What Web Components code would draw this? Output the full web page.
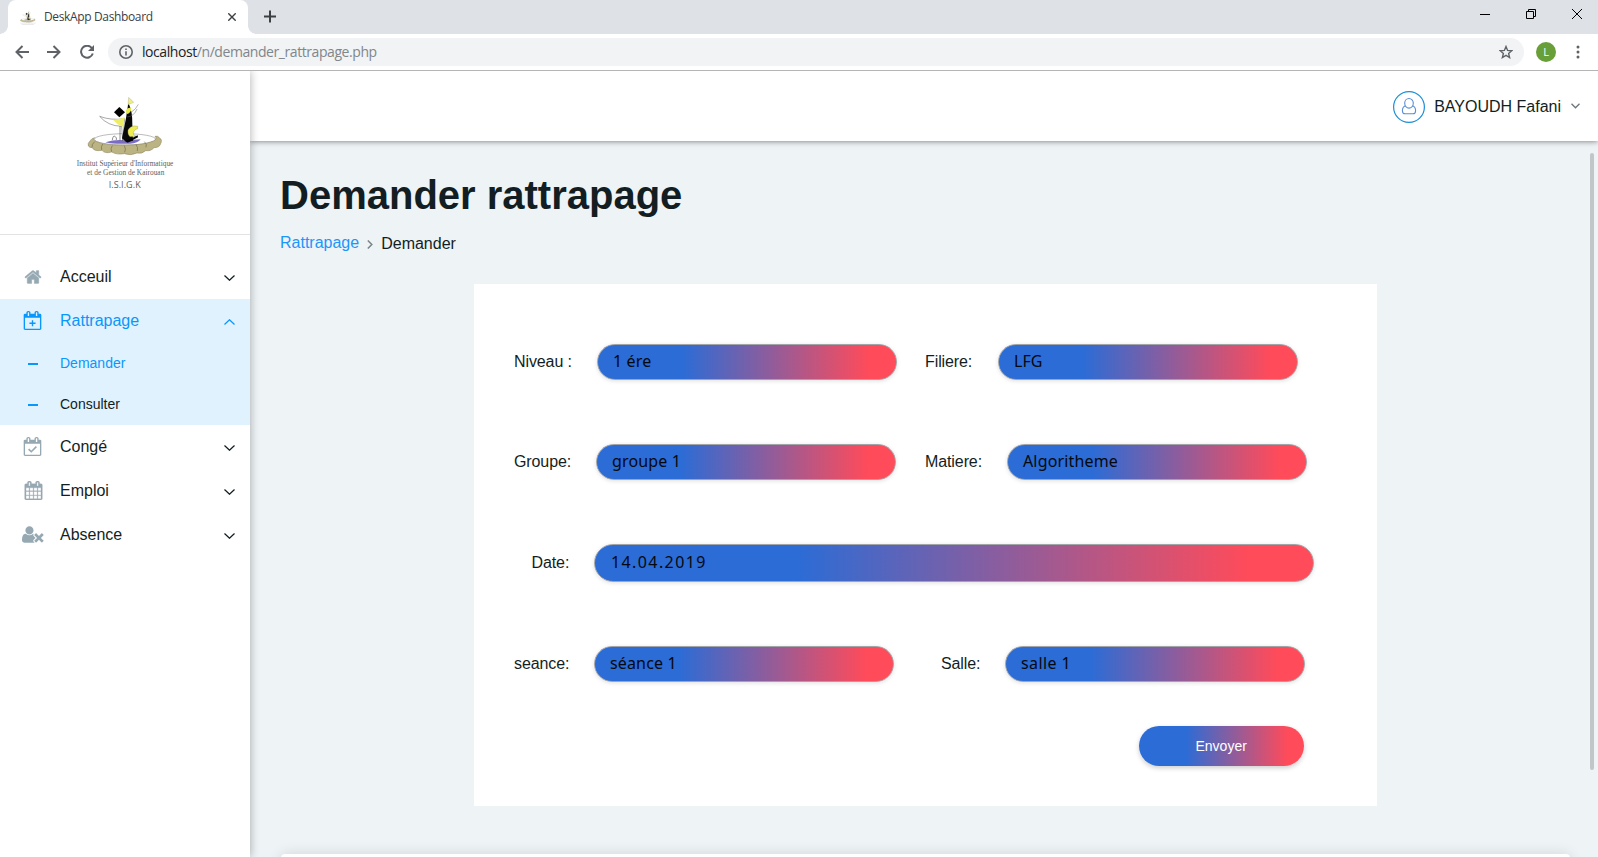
<!DOCTYPE html>
<html lang="fr">
<head>
<meta charset="utf-8">
<title>DeskApp Dashboard</title>
<style>
html,body{margin:0;height:100%;overflow:hidden;background:#fff}
body{font-family:"Liberation Sans",Arial,sans-serif;font-size:16px;color:#131e22}
</style>
</head>
<body>
<desk-window></desk-window>
<script>
const define = (name, html) => customElements.define(name, class extends HTMLElement {
  constructor() {
    super();
    const t = document.createElement('template');
    t.innerHTML = typeof html === 'function' ? html(this) : html;
    this.attachShadow({mode: 'open'}).append(t.content.cloneNode(true));
  }
});

const calFrame = 'M1728 384v1280q0 52-38 90t-90 38h-1408q-52 0-90-38t-38-90v-1280q0-52 38-90t90-38h128v-96q0-66 47-113t113-47h64q66 0 113 47t47 113v96h384v-96q0-66 47-113t113-47h64q66 0 113 47t47 113v96h128q52 0 90 38t38 90zM576 448v-288q0-13-9.500-22.500t-22.500-9.500h-64q-13 0-22.500 9.500t-9.500 22.500v288q0 13 9.500 22.500t22.500 9.500h64q13 0 22.500-9.500t9.500-22.500zM1344 448v-288q0-13-9.500-22.500t-22.500-9.500h-64q-13 0-22.500 9.500t-9.500 22.500v288q0 13 9.500 22.500t22.500 9.500h64q13 0 22.500-9.500t9.500-22.500z';
const icons = {
  home: ['0 0 1792 1792', 18, '<path d="M1472 992v480q0 26-19 45t-45 19h-384v-384h-256v384h-384q-26 0-45-19t-19-45v-480q0-1 .5-3t.5-3l575-474 575 474q1 2 1 6zm223-69l-62 74q-8 9-21 11h-3q-13 0-21-7l-692-577-692 577q-12 8-24 7-13-2-21-11l-62-74q-8-10-7-23.500t11-21.500l719-599q32-26 76-26t76 26l244 204v-195q0-14 9-23t23-9h192q14 0 23 9t9 23v408l219 182q10 8 11 21.500t-7 23.500z" stroke="currentColor" stroke-width="40"/>'],
  plus: ['0 0 1792 1792', 19, `<path fill-rule="evenodd" d="${calFrame}M192 640h1408v1024h-1408z"/><path d="M832 864h128v224h224v128h-224v224h-128v-224h-224v-128h224z"/>`],
  check: ['0 0 1792 1792', 19, `<path fill-rule="evenodd" d="${calFrame}M192 640h1408v1024h-1408z"/><path d="M530 1140l250 250 480-480" fill="none" stroke="currentColor" stroke-width="150"/>`],
  grid: ['0 0 1792 1792', 19, `<path fill-rule="evenodd" d="${calFrame}M192 640h288v288h-288zM544 640h320v288h-320zM928 640h320v288h-320zM1312 640h288v288h-288zM192 992h288v320h-288zM544 992h320v320h-320zM928 992h320v320h-320zM1312 992h288v320h-288zM192 1376h288v288h-288zM544 1376h320v288h-320zM928 1376h320v288h-320zM1312 1376h288v288h-288z" stroke="currentColor" stroke-width="24"/>`],
  absent: ['0 0 2048 1792', 19, '<path d="M704 896q-159 0-271.500-112.500t-112.500-271.500 112.500-271.500 271.500-112.500 271.500 112.500 112.500 271.500-112.500 271.500-271.500 112.500zm1077 320l249 249q9 9 9 23 0 13-9 22l-136 136q-9 9-22 9-14 0-23-9l-249-249-249 249q-9 9-23 9-13 0-22-9l-136-136q-9-9-9-22 0-14 9-23l249-249-249-249q-9-9-9-23 0-13 9-22l136-136q9-9 22-9 14 0 23 9l249 249 249-249q9-9 23-9 13 0 22 9l136 136q9 9 9 22 0 14-9 23zm-498 0l-181 181q-37 37-37 91 0 53 37 90l83 83q-21 3-44 3h-874q-121 0-194-69t-73-190q0-53 3.500-103.500t14-109 26.500-108.500 43-97.500 62-81 85.500-53.500 111.500-20q19 0 39 17 154 122 319 122t319-122q20-17 39-17 28 0 57 6-28 27-41 50t-13 56q0 54 37 91z"/>']
};

const drawing = `
  <ellipse cx="195" cy="163" rx="92" ry="17" fill="#fff" stroke="#777" stroke-width="1.500"/>
  <path d="M136 172q28-9 58-6l48-3q-8 12-32 13-48 2-74-4z" fill="#7a6cc4"/>
  <path d="M104 158q-10 2-14 10-8 7-5 15 4 6 12 5 5 12 29 8 8 11 29 5 15 9 38 5 20 7 38-2 14 4 26-7 16 2 25-9 17 0 20-12 6-12-3-17-6-8-14-5 8 8-5 14-32 13-83 12-62 2-87-10-14-6-6-12z" fill="#bcb383" stroke="#847c58" stroke-width="1.500"/>
  <path d="M104 170q-9 7-8 17m32-10q-6 8-3 18m32-13q-7 9-2 18m38-18q6 10 1 20m34-24q7 10 4 20m21-28q9 6 5 17" fill="none" stroke="#716a4c" stroke-width="2"/>
  <path d="M119 94q34 13 75 7l-6 67-3-44q-42-1-66-30z" fill="#fff" stroke="#555" stroke-width="1.500"/>
  <path d="M160 105q18-2 34-8l-5 28q-17-5-29-20z" fill="#eeee66"/>
  <path d="M178 66l17 16-17 15-16-15z" fill="#000"/>
  <path d="M205 53q13 26 12 66l2 48-20 5-13-12 12-60z" fill="#080808"/>
  <path d="M197 77q8-14 17-6-2 13-13 16z" fill="#e9ea45"/>
  <path d="M206 37l15 15-17 7z" fill="#eff07a" stroke="#999" stroke-width="1"/>
  <path d="M213 82q15-9 22-24M202 96q20-2 29-24" fill="none" stroke="#666" stroke-width="1.500"/>
  <path d="M233 124q-20-5-29 11-2 14 6 20l19-1q-14-6-7-15 3-7 11-8z" fill="#f0ed52" stroke="#777" stroke-width="1"/>
  <path d="M198 168l35-17 1 6-31 16z" fill="#000"/>
  <path d="M157 165q2-16 9-10 5 3 3 10m11-42v43" fill="none" stroke="#555" stroke-width="2"/>`;

define('tab-strip', `<style>
:host{display:flex;height:34px;background:#dee1e6;color:#3c4043;font:12px "Open Sans","Noto Sans",sans-serif}
.tab{width:240px;margin-left:8px;background:#fff;border-radius:8px 8px 0 0;display:flex;align-items:center;box-sizing:border-box;padding:0 12px;position:relative}
.tab:before,.tab:after{content:"";position:absolute;bottom:0;width:8px;height:8px}
.tab:before{left:-8px;background:radial-gradient(circle at 0 0,transparent 7.500px,#fff 8px)}
.tab:after{right:-8px;background:radial-gradient(circle at 100% 0,transparent 7.500px,#fff 8px)}
.title{margin-left:8px;flex:1;line-height:34px;letter-spacing:-.36px}
.new{margin:10px 0 0 16px}.ctl{margin-left:auto;display:flex;gap:36px;padding:9px 16px 0 0}
svg{display:block;fill:none;stroke:#3c4043}
</style>
<div class="tab"><svg width="16" height="16" viewBox="80 10 235 235" stroke="none" opacity=".85">${drawing}<path d="M85 218h225M105 238h180" stroke="#ccc" stroke-width="7"/></svg><span class="title">DeskApp Dashboard</span><svg width="8" height="8" stroke-width="1.400"><path d="M.3.3l7.400 7.400M7.700.3L.3 7.700"/></svg></div>
<svg class="new" width="12" height="13" stroke-width="2"><path d="M6 .5v12M0 6.500h12"/></svg>
<div class="ctl"><svg width="10" height="11" style="stroke:#000"><path d="M0 5.500h10"/></svg><svg width="10" height="11" style="stroke:#000"><path d="M.5 2.500h7v7h-7zM2.500 2.500v-2h7v7h-2"/></svg><svg width="10" height="11" style="stroke:#000"><path d="M0 0l10 10M10 0L0 10"/></svg></div>`);

define('address-bar', `<style>
:host{display:flex;height:36px;box-sizing:content-box;border-bottom:1px solid #b5b5b6;align-items:center;background:#fff;font:14px "Open Sans","Noto Sans",sans-serif;color:#80868b;position:relative;z-index:3}
svg{display:block;fill:none;stroke:#5f6368;stroke-width:2}
.nav{display:flex;gap:18px;padding-left:15px;width:94px;box-sizing:border-box}
.url{display:flex;align-items:center;flex:1;margin-left:14px;height:28px;border-radius:14px;background:#f1f3f4;padding:0 11px}
.t{margin-left:9px;flex:1;line-height:28px;letter-spacing:-.43px}b{font-weight:400;color:#202124}
.av{width:20px;height:20px;border-radius:50%;background:#689f38;color:#fff;font-size:11px;line-height:20px;text-align:center;margin:0 20px 0 12px}
.dots{margin-right:18px;stroke:none;fill:#5f6368}
</style>
<div class="nav"><svg width="14" height="14"><path d="M14 7H1.500M7.500 1L1.500 7l6 6"/></svg><svg width="14" height="14" style="margin-right:1px"><path d="M0 7h12.500M6.500 1l6 6-6 6"/></svg><svg width="14" height="14" style="flex:none"><path d="M11.800 3A6 6 0 1 0 12.800 8.500"/><path d="M14 0v6H8z" stroke="none" fill="#5f6368"/></svg></div>
<div class="url"><svg width="14" height="14" style="stroke-width:1.600"><circle cx="7" cy="7" r="6.200"/><path d="M7 6.200v4.300M7 3.500v1.600"/></svg><span class="t"><b>localhost</b>/n/demander_rattrapage.php</span><svg width="14" height="14" viewBox="0 0 14 14" style="stroke-width:1.400"><path d="M7 1.500l1.600 3.900 4.200.3-3.200 2.700 1 4.100L7 10.300l-3.600 2.200 1-4.100L1.200 5.700l4.200-.3z"/></svg></div>
<div class="av">L</div><svg class="dots" width="4" height="14"><circle cx="2" cy="2" r="1.500"/><circle cx="2" cy="7" r="1.500"/><circle cx="2" cy="12" r="1.500"/></svg>`);

define('school-logo', `<style>
:host{display:block;height:149px;padding-top:14px;border-bottom:1px solid #e0e2e3}
svg{display:block;margin:0 auto;width:130px;height:115px}
text{text-anchor:middle;fill:#5d625f;font-family:"Liberation Serif",serif}
</style><svg viewBox="0 0 390 345">${drawing}
<text x="195" y="242" font-size="22" textLength="290">Institut Supérieur d'Informatique</text>
<text x="197" y="269" font-size="22" textLength="232">et de Gestion de Kairouan</text>
<text x="194" y="310" font-size="27" textLength="96" style="font-family:'Open Sans',sans-serif">I.S.I.G.K</text></svg>`);

define('nav-item', el => {
  const [vb, h, body] = icons[el.getAttribute('icon')];
  const open = el.hasAttribute('open');
  return `<style>
:host{display:block;color:#131e22}
:host([open]){background:#dff2fe}
.row{display:grid;grid-template-columns:60px 1fr 11px;padding-right:15px;height:44px;align-items:center;line-height:44px}
:host([open]) .row{color:#0a97fb}
.ic{display:block;margin:-1px 0 0 ${el.getAttribute('shift') || 23}px;color:${open ? '#0a97fb' : '#96a9b3'}}
.ch{display:block;fill:none;stroke:currentColor;stroke-width:1.300;margin-top:2px}
</style><div class="row"><svg class="ic" height="${h}" width="${h * vb.split(' ')[2] / 1792}" viewBox="${vb}" fill="currentColor">${body}</svg><span>${el.getAttribute('label')}</span><svg class="ch" width="11" height="6" viewBox="0 0 11 6"><path d="${open ? 'M.5 5.400l5-4.600 5 4.600' : 'M.5.6l5 4.600 5-4.600'}"/></svg></div><slot></slot>`;
});

define('nav-sub', `<style>
:host{display:flex;align-items:center;height:41px;font-size:14px;line-height:41px}
:host([current]){color:#0a97fb}
i{width:10px;height:2px;background:#0a97fb;margin:0 22px 0 28px}
</style><i></i><slot></slot>`);

define('side-bar', `<style>
:host{display:block;width:250px;background:#fff;box-shadow:0 0 9px rgba(0,0,0,.32);position:relative;z-index:2}
nav{padding-top:20px}
</style><school-logo></school-logo><nav>
<nav-item icon="home" label="Acceuil" shift="24"></nav-item>
<nav-item icon="plus" label="Rattrapage" open><nav-sub current>Demander</nav-sub><nav-sub>Consulter</nav-sub></nav-item>
<nav-item icon="check" label="Congé"></nav-item>
<nav-item icon="grid" label="Emploi" shift="23.700"></nav-item>
<nav-item icon="absent" label="Absence" shift="22.400"></nav-item></nav>`);

define('top-bar', `<style>
:host{display:flex;height:70px;background:#fff;justify-content:flex-end;align-items:center;box-shadow:0 0 6px rgba(0,0,0,.55);position:relative;z-index:1;padding-right:18px;line-height:70px}
svg{display:block;fill:none}.u{margin:2px 9px 0 0}.c{margin-left:10px}span{padding-top:2px}
</style><svg class="u" width="32" height="32" stroke="#1b8fd8"><circle cx="16" cy="16" r="15.400" stroke-width="1.200"/><path d="M16 7.500a4.300 4.600 0 0 1 4.300 4.600c0 2.900-1.900 5-4.300 5s-4.300-2.100-4.300-5A4.300 4.600 0 0 1 16 7.500zM12.600 14.500c-2.400 1-3.200 3-3.200 5.200 0 1.900 1 3.100 2.700 3.100h7.800c1.700 0 2.700-1.200 2.700-3.100 0-2.200-.8-4.200-3.200-5.200" stroke="#5a8fd6" stroke-width="1.100"/></svg><span><slot></slot></span><svg class="c" width="9" height="6" stroke="#6c757a" stroke-width="1.300"><path d="M.5.8l4 4 4-4"/></svg>`);

define('page-title', `<style>
:host{display:block;padding:30px 0 0 30px}
h1{font-size:40px;line-height:48px;margin:0;font-weight:700}
.bc{display:flex;height:24px;line-height:24px;margin-top:12px;color:#131e22}
a{color:#1b96fb}svg{display:block;fill:none;stroke:#7b8488;stroke-width:1.500;margin:9px 8px 0 8px}span{padding-top:1px}
</style><h1><slot></slot></h1><div class="bc"><a>Rattrapage</a><svg width="6" height="9"><path d="M.8.5l4 4-4 4"/></svg><span>Demander</span></div>`);

define('form-field', el => `<style>
:host{display:flex;margin-left:${el.getAttribute('gap') || 0}px;height:100%}
label{width:${el.getAttribute('lw')}px;line-height:${el.getAttribute('lh') || 36}px;white-space:nowrap;letter-spacing:-.1px}
div{width:${el.getAttribute('w') || 300}px;box-sizing:border-box;border:1px solid #a3a6a8;border-radius:19px;background:linear-gradient(to right,#2b6cd6 28%,#ff4b5a 91%);box-shadow:0 1px 4px rgba(0,0,0,.13);font:16px/32px "Noto Sans","Open Sans",sans-serif;letter-spacing:${el.getAttribute('ls') || .15}px;color:#05080f;padding:0 0 2px ${el.getAttribute('pl') || 15}px;display:flex;align-items:center}
</style><label>${el.getAttribute('label')}</label><div><slot></slot></div>`);

define('form-row', `<style>:host{display:flex;height:36px;margin-bottom:64px}:host([tall]){height:38px}:host([last]){margin-bottom:44px}</style><slot></slot>`);

define('send-button', `<style>
:host{display:block;width:165px;height:40px;margin-left:625px;border-radius:20px;background:linear-gradient(to right,#2b6cd6 28%,#ff4b5a 90%);box-shadow:0 2px 5px rgba(0,0,0,.2);color:#fff;font-size:14px;line-height:40px;box-sizing:border-box;padding-left:56.500px}
</style><slot></slot>`);

define('request-form', `<style>
:host{display:block;width:903px;height:522px;margin:29px 0 0 224px;background:#fff;box-sizing:border-box;padding:60px 0 0 40px}
</style>
<form-row><form-field label="Niveau :" lw="83">1 ére</form-field><form-field label="Filiere:" lw="73" gap="28" ls="0">LFG</form-field></form-row>
<form-row><form-field label="Groupe:" lw="82">groupe 1</form-field><form-field label="Matiere:" lw="82" gap="29">Algoritheme</form-field></form-row>
<form-row tall><form-field label="Date:" lw="62.500" lh="38" w="720" gap="17.500" ls="1.400" pl="16">14.04.2019</form-field></form-row>
<form-row last><form-field label="seance:" lw="80">séance 1</form-field><form-field label="Salle:" lw="64" gap="47" ls=".4">salle 1</form-field></form-row>
<send-button>Envoyer</send-button>`);

define('desk-window', `<style>
:host{display:flex;flex-direction:column;height:857px;overflow:hidden}
.app{display:flex;flex:1;min-height:0}
main{flex:1;min-width:0;background:#eef3f6;display:flex;flex-direction:column}
.body{display:flex;flex:1;min-height:0}
.content{flex:1;min-width:0}
.thumb{width:4px;height:617px;border-radius:2px;background:#c1c6c9;margin:12px 4px 0 0}
.next{height:60px;margin:48px 20px 0 31px;border-radius:4px;background:#fff;box-shadow:0 0 14px rgba(0,0,0,.12)}
</style><tab-strip></tab-strip><address-bar></address-bar>
<div class="app"><side-bar></side-bar><main><top-bar>BAYOUDH Fafani</top-bar><div class="body"><div class="content"><page-title>Demander rattrapage</page-title><request-form></request-form><div class="next"></div></div><div class="thumb"></div></div></main></div>`);
</script>
</body>
</html>
